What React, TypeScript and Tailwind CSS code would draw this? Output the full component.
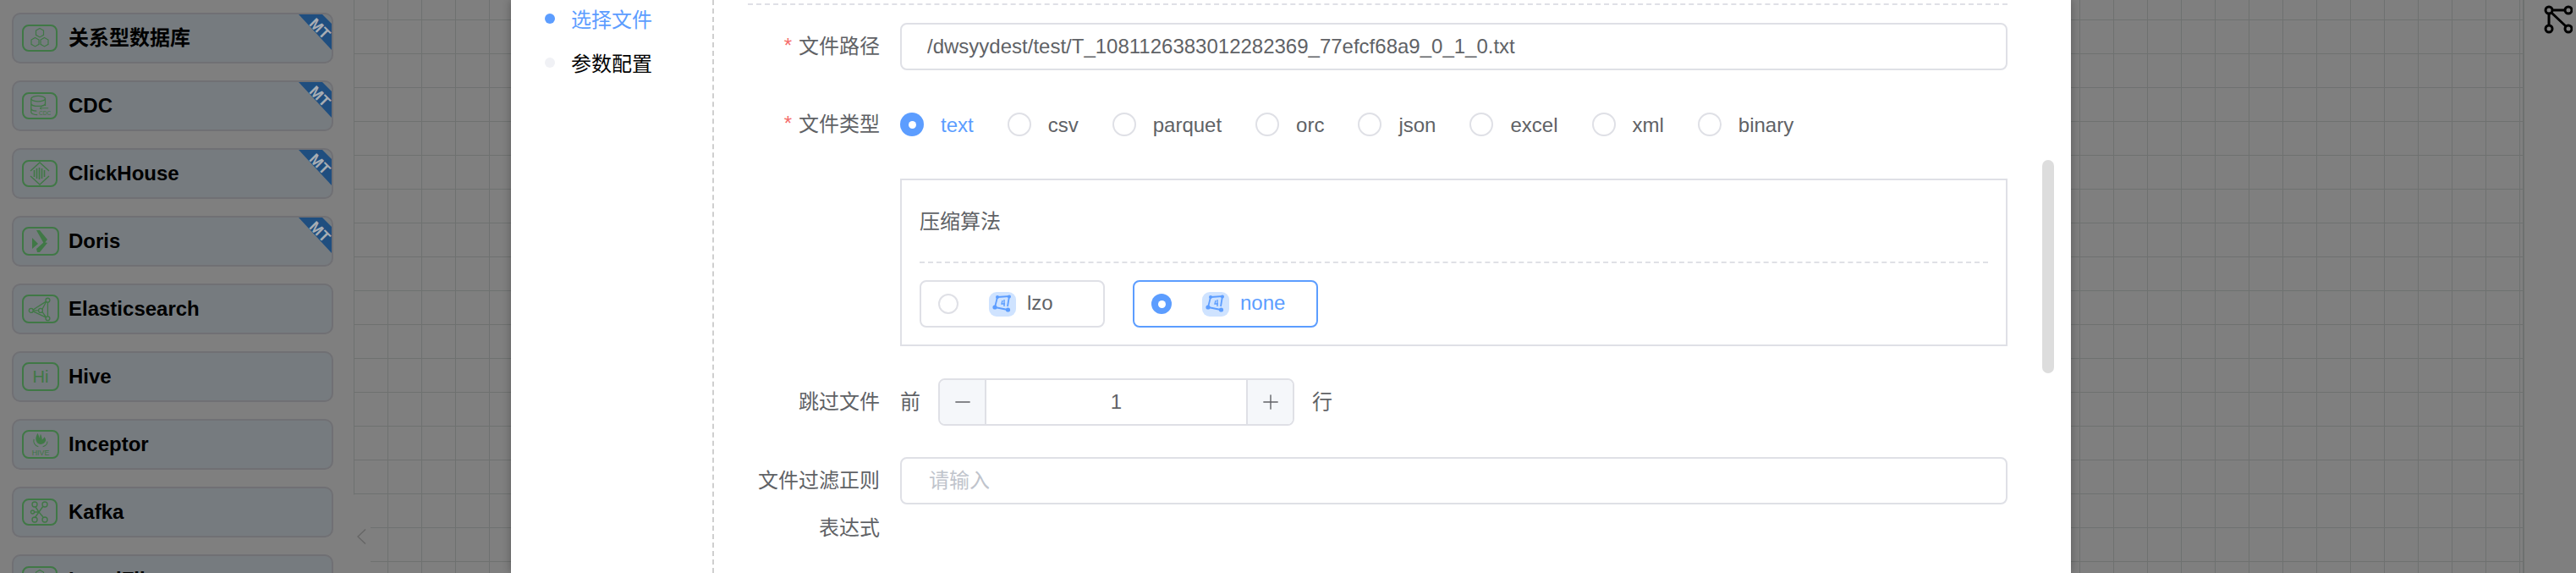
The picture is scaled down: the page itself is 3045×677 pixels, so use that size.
import { Minus, Plus } from 'lucide-react';
import type { ReactNode } from 'react';

const GREEN = '#80f08c';

const HexIcon = () => (
  <svg width="26" height="26" viewBox="0 0 26 26" fill="none" stroke={GREEN} strokeWidth="1.2">
    <path d="M13 1.500l4.500 2.600v5.200L13 11.900 8.500 9.300V4.100z" />
    <path d="M7.500 12.500l4.500 2.600v5.200l-4.500 2.600L3 20.300v-5.200z" />
    <path d="M18.500 12.500l4.500 2.600v5.200l-4.500 2.600-4.500-2.600v-5.200z" />
  </svg>
);

const CdcIcon = () => (
  <svg width="26" height="26" viewBox="0 0 28 28" fill="none" stroke={GREEN} strokeWidth="1.4">
    <ellipse cx="12" cy="5" rx="9" ry="3.500" />
    <path d="M3 5v17c0 2 4 3.500 8 3.500M21 5v9M3 11c0 2 4 3.500 9 3.500s9-1.500 9-3.500M3 17c0 2 3 3.500 7 3.500" />
    <path d="M14 17h11M14 17l2.500-1.500M14 17l2.500 1.500" strokeWidth="1" />
    <text x="13" y="26" fontSize="7" fill={GREEN} stroke="none" fontFamily="Liberation Sans">CDC</text>
  </svg>
);

const ClickHouseIcon = () => (
  <svg width="26" height="28" viewBox="0 0 26 28" fill="none" stroke={GREEN} strokeWidth="1.4">
    <path d="M2 11L13 1l11 10M2 17l11 10 11-10" />
    <path d="M6.500 10v8M9.500 8v12M12.500 7v14M15.500 8v12M18.500 10v8" strokeWidth="1.600" />
  </svg>
);

const DorisIcon = () => (
  <svg width="20" height="26" viewBox="0 0 20 26" fill={GREEN}>
    <path d="M5 0h4l9 11-4 5z" />
    <path d="M0 9l7 7-7 6z" />
    <path d="M14 14l4 1-9 11H6l-1-4z" />
  </svg>
);

const ElasticIcon = () => (
  <svg width="30" height="30" viewBox="0 0 32 32" fill="none" stroke={GREEN} strokeWidth="1.400">
    <circle cx="25" cy="5" r="2.600" />
    <circle cx="4" cy="18" r="2.600" />
    <circle cx="25" cy="28" r="2.600" />
    <circle cx="16" cy="18" r="2.600" />
    <path d="M23 6.500L6.500 17M6.500 19l16 7.500M25 7.500v18M18 16.500l5-9.500M18 19.500l5 7M6.600 18h6.800" />
  </svg>
);

const HiveIcon = () => (
  <svg width="30" height="30" viewBox="0 0 34 34" fill="none" stroke={GREEN}>
    <path d="M13 2c-2 4-3 7-2 10 1 3 3 5 6 5s6-2 7-5c0-2-1-4-2-5-1 2-2 3-3 4 0-3-1-6-2-8-1 2-1 4-1 6-1-2-2-5-3-7z" fill={GREEN} stroke="none" />
    <path d="M8 10c-1 4 1 9 6 10M26 13c0 4-2 6-6 7" strokeWidth="1.200" />
    <text x="17" y="32" textAnchor="middle" fontSize="10" fill={GREEN} stroke="none" fontFamily="Liberation Sans">HIVE</text>
  </svg>
);

const KafkaIcon = () => (
  <svg width="24" height="26" viewBox="0 0 24 26" fill="none" stroke={GREEN} strokeWidth="1.400">
    <circle cx="6" cy="4" r="3" />
    <circle cx="18" cy="4" r="3" />
    <circle cx="6" cy="22" r="3" />
    <circle cx="18" cy="22" r="3" />
    <circle cx="3.500" cy="13" r="2" />
    <path d="M7 7l4 6-5 7M16 6l-5 7 5 6M5.500 13H11" />
  </svg>
);

type Source = { name: string; icon: ReactNode; mt?: boolean; wide?: boolean };

const sources: Source[] = [
  { name: '关系型数据库', icon: <HexIcon />, mt: true },
  { name: 'CDC', icon: <CdcIcon />, mt: true },
  { name: 'ClickHouse', icon: <ClickHouseIcon />, mt: true },
  { name: 'Doris', icon: <DorisIcon />, mt: true, wide: true },
  { name: 'Elasticsearch', icon: <ElasticIcon />, wide: true },
  { name: 'Hive', icon: <span className="text-[20px] leading-none text-[#80f08c]">Hi</span>, wide: true },
  { name: 'Inceptor', icon: <HiveIcon />, wide: true },
  { name: 'Kafka', icon: <KafkaIcon /> },
  { name: 'LocalFile', icon: <HexIcon /> },
];

const fileTypes = ['text', 'csv', 'parquet', 'orc', 'json', 'excel', 'xml', 'binary'];

function SourceCard({ item }: { item: Source }) {
  return (
    <div className="relative flex h-[60px] w-[380px] shrink-0 items-center overflow-hidden rounded-[10px] border-2 border-[#e0e0e8] bg-[#ecf6fe] pl-[10px]">
      <div className="w-[44px] shrink-0">
        <div
          className={`flex items-center justify-center rounded-[8px] border-2 border-[#80f08c] ${
            item.wide ? 'h-[34px] w-[44px]' : 'h-[32px] w-[42px]'
          }`}
        >
          {item.icon}
        </div>
      </div>
      <span className="ml-[11px] text-[24px] leading-none font-bold text-black">{item.name}</span>
      {item.mt && (
        <div className="absolute top-0 right-0 h-[42px] w-[39px] overflow-hidden">
          <div className="h-full w-full bg-[#3e9cff] [clip-path:polygon(0_0,28px_0,100%_11px,100%_100%)]" />
          {/* the badge text sits above the dimmed layer in the original */}
          <span className="absolute top-[8px] left-[12px] z-10 rotate-45 text-[18px] leading-none font-bold text-[#a8adb3]">MT</span>
        </div>
      )}
    </div>
  );
}

function Radio({ checked, size = 'lg' }: { checked?: boolean; size?: 'lg' | 'sm' }) {
  const dim = size === 'lg' ? 'h-[28px] w-[28px]' : 'h-[24px] w-[24px]';
  if (checked) {
    return (
      <span className={`flex shrink-0 items-center justify-center rounded-full bg-[#5c9dff] ${dim}`}>
        <span className="h-[9px] w-[9px] rounded-full bg-white" />
      </span>
    );
  }
  return <span className={`shrink-0 rounded-full border-2 border-[#dfe0e6] bg-white ${dim}`} />;
}

function CompressIcon() {
  return (
    <span className="flex h-[29px] w-[32px] shrink-0 items-center justify-center rounded-[9px] bg-[#cfe3ff]">
      <svg width="24" height="22" viewBox="0 0 24 22" fill="none" stroke="#5c9dff" strokeWidth="1.800">
        <path d="M6 3l14-1-2 12M6 3L3 15l15 3" />
        <path d="M12 7l-1 4h4M14 6v8" strokeWidth="1.400" />
        <circle cx="6" cy="3" r="2" fill="#5c9dff" stroke="none" />
        <circle cx="20" cy="2.500" r="2" fill="#5c9dff" stroke="none" />
        <circle cx="3" cy="15" r="2.600" fill="#5c9dff" stroke="none" />
        <circle cx="18.500" cy="18" r="2.600" fill="#5c9dff" stroke="none" />
      </svg>
    </span>
  );
}

function Algo({ label, checked }: { label: string; checked?: boolean }) {
  return (
    <div
      className={`flex h-[56px] w-[219px] items-center rounded-[8px] border-2 pl-[20px] ${
        checked ? 'border-[#5c9dff] text-[#5c9dff]' : 'border-[#dfe0e6] text-[#606266]'
      }`}
    >
      <Radio checked={checked} size="sm" />
      <span className="ml-[36px]">
        <CompressIcon />
      </span>
      <span className="ml-[13px] -translate-y-[1px]">{label}</span>
    </div>
  );
}

function FormRow({ label, required, children, className = '' }: { label: string; required?: boolean; children: ReactNode; className?: string }) {
  return (
    <div className={`flex ${className}`}>
      <label className="relative w-[156px] shrink-0 text-right leading-[56px] text-[#606266]">
        {required && <span className="absolute -top-[1px] right-[104px] text-[#f56c6c]">*</span>}
        {label}
      </label>
      <div className="ml-[24px] min-w-0 flex-1">{children}</div>
    </div>
  );
}

export default function App() {
  return (
    <div className="relative flex h-[677px] w-[3045px] overflow-hidden bg-white font-['Liberation_Sans','Noto_Sans_CJK_SC',sans-serif] text-[24px]">
      {/* node palette */}
      <aside className="flex w-[418px] shrink-0 flex-col gap-[20px] pt-[15px] pl-[14px]">
        {sources.map((item) => (
          <SourceCard key={item.name} item={item} />
        ))}
      </aside>

      {/* canvas */}
      <main className="relative flex-1 [background-image:linear-gradient(#dde2e0_1px,transparent_1px),linear-gradient(90deg,#dde2e0_1px,transparent_1px)] [background-size:40px_40px] [background-position:0_23px]">
        <div className="absolute top-[584px] bottom-0 left-0 flex w-[20px] items-start bg-white pt-[41px] pl-[4px] [clip-path:polygon(0_0,100%_20px,100%_100%,0_100%)]">
          <svg width="11" height="18" viewBox="0 0 11 18" fill="none" stroke="#cccccc" strokeWidth="1.500">
            <path d="M10 0.500L1 9l9 8.500" />
          </svg>
        </div>
      </main>

      {/* right rail */}
      <aside className="w-[63px] shrink-0 border-l-2 border-[#dde2e0] pt-[6px] pl-[23px]">
        <svg width="34" height="34" viewBox="0 0 34 34" fill="none" stroke="#000" strokeWidth="3">
          <circle cx="6" cy="6" r="4" />
          <circle cx="29" cy="6" r="4" />
          <circle cx="6" cy="28" r="4" />
          <circle cx="29" cy="28" r="4" />
          <path d="M10 6h15M6 10v14M9 9l17 16" />
        </svg>
      </aside>

      {/* modal */}
      <div className="absolute inset-0 bg-black/50 pl-[604px]">
        <div className="relative flex h-full w-[1844px] bg-white shadow-[0_0_10px_rgba(0,0,0,0.3)]">
          <nav className="w-[240px] shrink-0 border-r-2 border-dashed border-[#cfcfcf] pl-[40px]">
            <div className="-mt-[2px] flex h-[52px] items-center gap-[19px] text-[#5c9dff]">
              <span className="h-[12px] w-[12px] -translate-y-[2px] rounded-full bg-[#5c9dff]" />
              选择文件
            </div>
            <div className="flex h-[52px] items-center gap-[19px] text-black">
              <span className="h-[12px] w-[12px] -translate-y-[2px] rounded-full bg-[#f0f1f5]" />
              参数配置
            </div>
          </nav>

          <section className="flex-1 pr-[75px] pl-[40px]">
            <div className="h-[6px] border-b-2 border-dashed border-[#dfe0e6]" />

            <FormRow label="文件路径" required className="mt-[21px]">
              <input
                readOnly
                value="/dwsyydest/test/T_1081126383012282369_77efcf68a9_0_1_0.txt"
                className="h-[56px] w-full rounded-[8px] border-2 border-[#dfe0e6] pl-[30px] text-[#606266] outline-none"
              />
            </FormRow>

            <FormRow label="文件类型" required className="mt-[36px]">
              <div className="flex h-[56px] items-center gap-[40px]">
                {fileTypes.map((t, i) => (
                  <div key={t} className={`flex items-center gap-[20px] ${i === 0 ? 'text-[#5c9dff]' : 'text-[#606266]'}`}>
                    <Radio checked={i === 0} />
                    <span className="translate-y-[1px]">{t}</span>
                  </div>
                ))}
              </div>
            </FormRow>

            <div className="mt-[36px] ml-[180px] h-[198px] border-2 border-[#dfe0e6] px-[21px]">
              <div className="flex h-[98px] items-center border-b-2 border-dashed border-[#dfe0e6] pt-[2px] text-[#606266]">压缩算法</div>
              <div className="mt-[20px] flex gap-[33px]">
                <Algo label="lzo" />
                <Algo label="none" checked />
              </div>
            </div>

            <FormRow label="跳过文件" className="mt-[38px]">
              <div className="flex h-[56px] items-center text-[#606266]">
                <span>前</span>
                <div className="mx-[21px] flex h-[56px] w-[421px] overflow-hidden rounded-[8px] border-2 border-[#dfe0e6]">
                  <span className="flex w-[55px] items-center justify-center border-r-2 border-[#dfe0e6] bg-[#f5f7fa]">
                    <Minus size={28} strokeWidth={1.2} />
                  </span>
                  <span className="flex flex-1 items-center justify-center">1</span>
                  <span className="flex w-[55px] items-center justify-center border-l-2 border-[#dfe0e6] bg-[#f5f7fa]">
                    <Plus size={28} strokeWidth={1.2} />
                  </span>
                </div>
                <span>行</span>
              </div>
            </FormRow>

            <FormRow label="文件过滤正则表达式" className="mt-[37px]">
              <input
                readOnly
                placeholder="请输入"
                className="h-[56px] w-full rounded-[8px] border-2 border-[#dfe0e6] pl-[32px] outline-none placeholder:text-[#c0c4cc]"
              />
            </FormRow>
          </section>

          <div className="absolute top-[189px] left-[1810px] h-[252px] w-[14px] rounded-[7px] bg-[#dddddd]" />
        </div>
      </div>
    </div>
  );
}
